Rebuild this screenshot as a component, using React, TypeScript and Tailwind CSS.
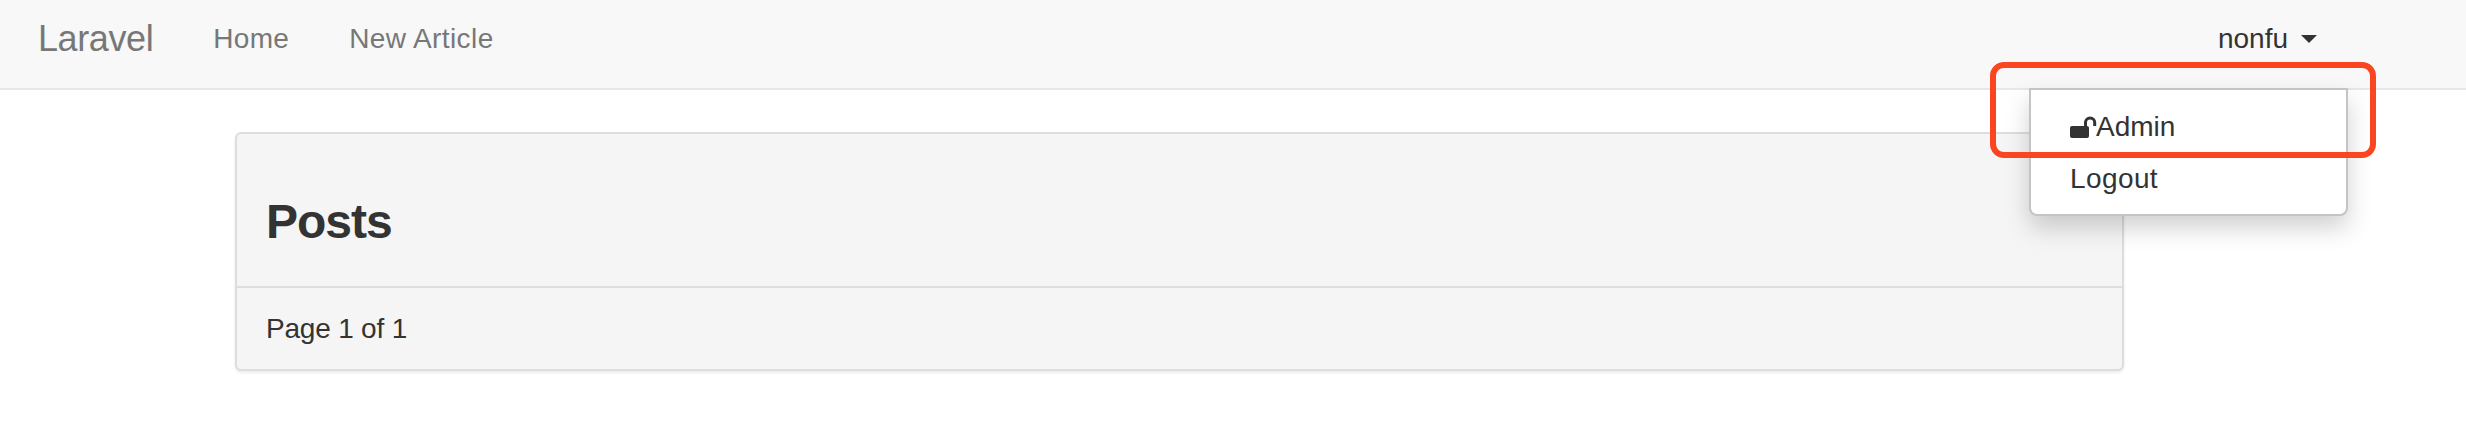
const UnlockIcon = () => (
  <svg width="27" height="22" viewBox="0 0 27 22" className="shrink-0">
    <rect x="0" y="10" width="19" height="12" rx="2" fill="#333333" />
    <path d="M15.5 11V6.5a4.6 4.6 0 0 1 9.2 0V10" fill="none" stroke="#333333" strokeWidth="3" />
  </svg>
);

const App = () => {
  return (
    <div className="relative h-[436px] w-[2466px] overflow-hidden bg-white font-['Liberation_Sans',Arial,sans-serif] text-[#333333]">
      {/* Navbar */}
      <nav className="flex h-[90px] items-center border-b-2 border-[#e7e7e7] bg-[#f8f8f8] pb-[11px]">
        <a className="ml-[38px] text-[36px] tracking-[-0.4px] text-[#777777]">Laravel</a>
        <a className="ml-[60px] text-[28px] tracking-[0.3px] text-[#777777]">Home</a>
        <a className="ml-[60px] text-[28px] tracking-[0.4px] text-[#777777]">New Article</a>
        <div className="ml-auto mr-[149px] flex items-center gap-[13px] text-[28px]">
          <span>nonfu</span>
          <span className="mt-[1px] h-0 w-0 border-x-[8px] border-t-[8px] border-x-transparent border-t-[#333333]" />
        </div>
      </nav>

      {/* Panel */}
      <div className="ml-[235px] mt-[42px] w-[1889px] rounded-[6px] border-2 border-[#dddddd] bg-[#f5f5f5] shadow-[0_2px_3px_rgba(0,0,0,0.08)]">
        <div className="flex h-[154px] items-end border-b-2 border-[#dddddd] px-[29px] pb-[40px]">
          <h3 className="text-[48px] leading-none font-bold tracking-[-1px]">Posts</h3>
        </div>
        <div className="flex h-[81px] items-center px-[29px] text-[28px] tracking-[-0.2px]">Page 1 of 1</div>
      </div>

      {/* Dropdown menu */}
      <div className="absolute left-[2029px] top-[88px] h-[128px] w-[319px] rounded-b-[8px] border-2 border-[#c4c4c4] bg-white pt-[12px] text-[28px] shadow-[0_12px_24px_rgba(0,0,0,0.18)]">
        <div className="flex h-[50px] items-center pl-[39px]">
          <UnlockIcon />
          <span className="-ml-[1px]">Admin</span>
        </div>
        <div className="flex h-[54px] items-center pl-[39px] tracking-[0.4px]">Logout</div>
      </div>

      {/* Red annotation box */}
      <div className="absolute left-[1990px] top-[62px] h-[96px] w-[386px] rounded-[14px] border-[6px] border-[#fb4521]" />
    </div>
  );
};

export default App;
